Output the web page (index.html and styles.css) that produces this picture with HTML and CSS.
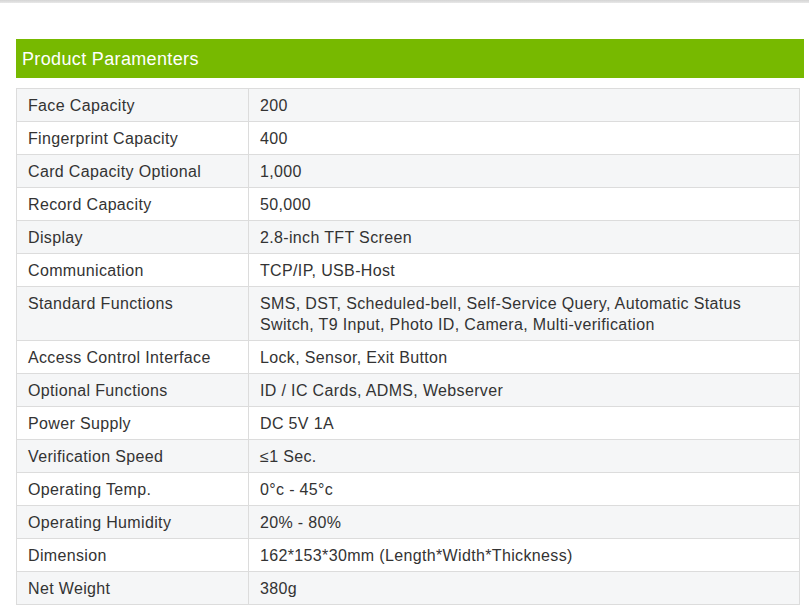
FILE: index.html
```html
<!DOCTYPE html>
<html>
<head>
<meta charset="utf-8">
<link rel="stylesheet" href="styles.css">
</head>
<body>
<div class="topline"></div>
<div class="wrap">
  <h2 class="title">Product Paramenters</h2>
  <table class="params">
    <tr><td class="k">Face Capacity</td><td>200</td></tr>
    <tr><td class="k">Fingerprint Capacity</td><td>400</td></tr>
    <tr><td class="k">Card Capacity Optional</td><td>1,000</td></tr>
    <tr><td class="k">Record Capacity</td><td>50,000</td></tr>
    <tr><td class="k">Display</td><td>2.8-inch TFT Screen</td></tr>
    <tr><td class="k">Communication</td><td>TCP/IP, USB-Host</td></tr>
    <tr><td class="k">Standard Functions</td><td>SMS, DST, Scheduled-bell, Self-Service Query, Automatic Status Switch, T9 Input, Photo ID, Camera, Multi-verification</td></tr>
    <tr><td class="k">Access Control Interface</td><td>Lock, Sensor, Exit Button</td></tr>
    <tr><td class="k">Optional Functions</td><td>ID / IC Cards, ADMS, Webserver</td></tr>
    <tr><td class="k">Power Supply</td><td>DC 5V 1A</td></tr>
    <tr><td class="k">Verification Speed</td><td>≤1 Sec.</td></tr>
    <tr><td class="k">Operating Temp.</td><td>0°c - 45°c</td></tr>
    <tr><td class="k">Operating Humidity</td><td>20% - 80%</td></tr>
    <tr><td class="k">Dimension</td><td>162*153*30mm (Length*Width*Thickness)</td></tr>
    <tr><td class="k">Net Weight</td><td>380g</td></tr>
  </table>
</div>
</body>
</html>
```
FILE: styles.css
```css
html, body {
  margin: 0;
  padding: 0;
  background: #fff;
  font-family: "Liberation Sans", Arial, sans-serif;
}
.topline {
  height: 3px;
  background: linear-gradient(#d4d4d4, #e8e8e8);
}
.wrap {
  padding: 36px 5px 0 16px;
}
.title {
  margin: 0;
  height: 39px;
  line-height: 41px;
  background: #77b900;
  color: #fff;
  font-size: 18px;
  font-weight: normal;
  letter-spacing: 0.35px;
  padding-left: 6px;
}
.params {
  margin-top: 10px;
  width: 784px;
  border-collapse: collapse;
  border: 1px solid #dcdcdc;
  font-size: 16px;
  letter-spacing: 0.35px;
  color: #333;
}
.params td {
  border: 1px solid #dcdcdc;
  padding: 6px 11px 5px 11px;
  line-height: 21px;
  vertical-align: top;
}
.params td.k {
  width: 209px;
}
.params tr:nth-child(odd) {
  background: #f5f6f7;
}
```
